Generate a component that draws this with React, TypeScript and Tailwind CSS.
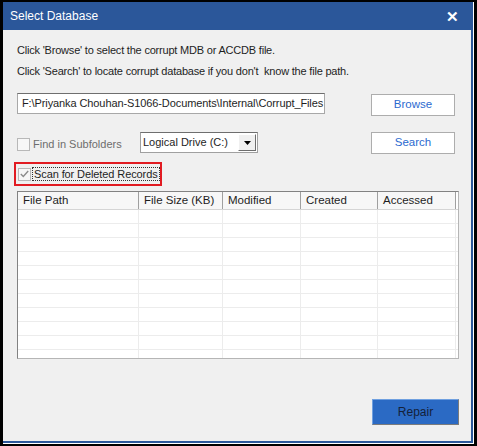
import React from "react";

const font = { fontFamily: '"Liberation Sans", Arial, sans-serif' };

function Box({ checked }: { checked?: boolean }) {
  return (
    <div className="w-[13px] h-[13px] border border-[#b8b8b8] bg-[#f7f7f7] flex items-center justify-center shrink-0">
      {checked && (
        <svg width="9" height="8" viewBox="0 0 9 8">
          <path d="M0.8 4 L3.3 6.5 L8.2 1" fill="none" stroke="#8c8c8c" strokeWidth="1.4" />
        </svg>
      )}
    </div>
  );
}

const cols = [
  { label: "File Path", w: "w-[121px]" },
  { label: "File Size (KB)", w: "w-[84px]" },
  { label: "Modified", w: "w-[78px]" },
  { label: "Created", w: "w-[77px]" },
  { label: "Accessed", w: "w-[78px]" },
];

export default function App() {
  return (
    <div
      className="w-[477px] h-[446px] bg-black pl-[3px] pt-[2px] pr-[3px] pb-[2px] flex flex-col text-[11px] text-[#1e1e1e]"
      style={font}
    >
      <div className="flex-1 flex flex-col border-r border-b border-white">
        <div className="flex-1 flex flex-col border-r-2 border-b-2 border-[#2b579a]">
          {/* title bar */}
          <div className="h-[28px] bg-[#2b579a] flex items-center justify-between pl-[7px] pr-[12px] text-white text-[12px]">
            <span>Select Database</span>
            <span className="text-[15px] font-bold leading-none">✕</span>
          </div>

          <div className="flex-1 bg-[#f0f0f0] pl-[14px] pt-[10px] flex flex-col">
            <div className="leading-[21px] tracking-[-0.2px]">Click 'Browse' to select the corrupt MDB or ACCDB file.</div>
            <div className="leading-[21px] tracking-[-0.2px]">Click 'Search' to locate corrupt database if you don't&nbsp; know the file path.</div>

            {/* path row */}
            <div className="flex items-start mt-[11px]">
              <div className="w-[308px] h-[21px] bg-white border border-[#a8a8a8] border-t-[#6e6e6e] flex items-center pl-[4px] overflow-hidden whitespace-nowrap text-[11px] tracking-[-0.1px]">
                F:\Priyanka Chouhan-S1066-Documents\Internal\Corrupt_Files
              </div>
              <button className="ml-[46px] mt-[1px] w-[84px] h-[22px] bg-white border border-[#adadad] text-[#2a6ad0] text-[11.5px]">
                Browse
              </button>
            </div>

            {/* search row */}
            <div className="flex items-start mt-[16px]">
              <div className="w-[123px] flex items-center gap-[3px] mt-[4px] text-[#6d6d6d]">
                <Box />
                <span>Find in Subfolders</span>
              </div>
              <div className="w-[118px] h-[21px] bg-white border border-[#a0a0a0] border-t-[#6e6e6e] flex items-center justify-between pl-[2px] pr-[1px]">
                <span>Logical Drive (C:)</span>
                <div className="w-[18px] h-[17px] bg-[#f0f0f0] border border-[#fff] border-r-[#6e6e6e] border-b-[#6e6e6e] flex items-center justify-center">
                  <svg width="7" height="4" viewBox="0 0 7 4">
                    <path d="M0 0 H7 L3.5 4 Z" fill="#000" />
                  </svg>
                </div>
              </div>
              <button className="ml-[113px] w-[84px] h-[22px] bg-white border border-[#adadad] text-[#2a6ad0] text-[11.5px]">
                Search
              </button>
            </div>

            {/* scan deleted */}
            <div className="-ml-[3px] mt-[8px] w-[148px] h-[24px] border-2 border-[#e11b22] flex items-center pl-[2px] gap-[1px]">
              <Box checked />
              <span className="border border-dotted border-[#333] px-[1px] leading-[12px] text-[11px] tracking-[-0.1px] whitespace-nowrap">
                Scan for Deleted Records
              </span>
            </div>

            {/* list view */}
            <div className="mt-[5px] w-[442px] h-[168px] bg-white border border-[#b5b5b5] border-t-[#828282] border-l-[#828282] flex flex-col overflow-hidden">
              <div className="h-[18px] flex shrink-0 bg-[#f7f7f7] border-b border-[#d5d5d5]">
                {cols.map((c) => (
                  <div
                    key={c.label}
                    className={`${c.w} shrink-0 border-r border-[#a0a0a0] pl-[5px] flex items-center text-[11.5px]`}
                  >
                    {c.label}
                  </div>
                ))}
                <div className="flex-1 bg-white" />
              </div>
              <div className="flex-1 flex flex-col">
                {Array.from({ length: 11 }).map((_, i) => (
                  <div key={i} className="h-[14px] flex shrink-0 border-b border-[#ececec]">
                    {cols.map((c) => (
                      <div key={c.label} className={`${c.w} shrink-0 border-r border-[#ececec]`} />
                    ))}
                  </div>
                ))}
              </div>
            </div>

            <div className="flex justify-end pr-[12px] mt-[40px]">
              <button className="w-[87px] h-[26px] bg-[#2b6ac4] border border-[#6fa0e0] border-r-[#7b7b7b] border-b-[#7b7b7b] text-[#14213a] text-[12px]">
                Repair
              </button>
            </div>
          </div>
        </div>
      </div>
    </div>
  );
}
